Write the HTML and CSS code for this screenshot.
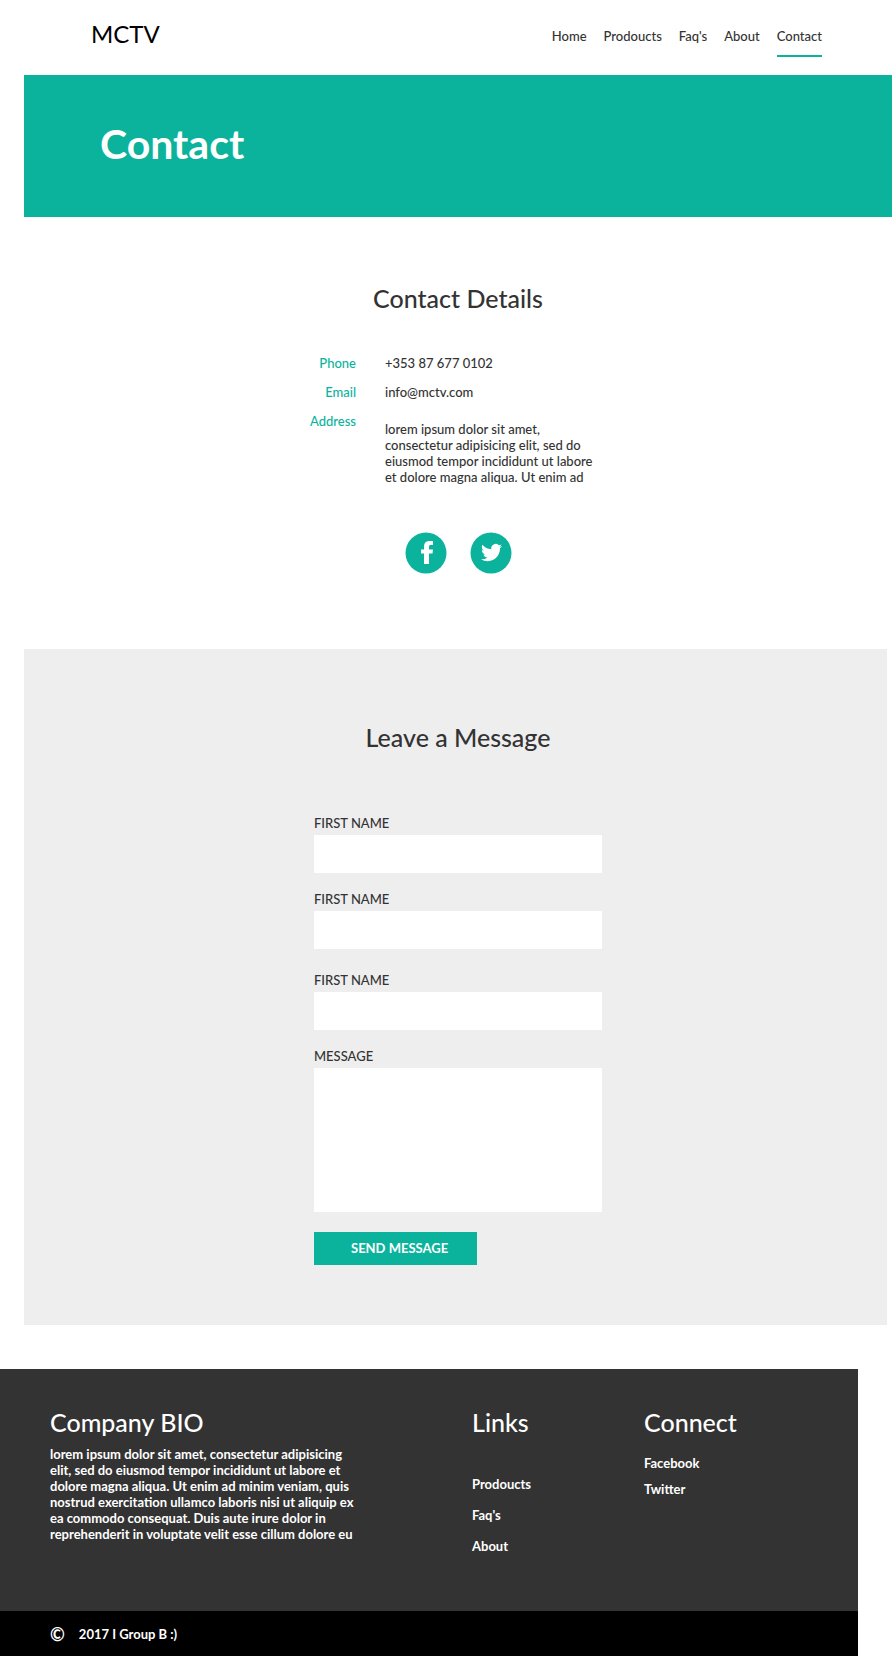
FILE: index.html
```html
<!DOCTYPE html>
<html lang="en">
<head>
<meta charset="utf-8">
<meta name="viewport" content="width=device-width, initial-scale=1">
<title>MCTV – Contact</title>
<link rel="stylesheet" href="styles.css">
</head>
<body>
<header class="site-header">
  <a class="logo" href="#">MCTV</a>
  <nav class="nav">
    <a class="nav-link" href="#">Home</a>
    <a class="nav-link" href="#">Prodoucts</a>
    <a class="nav-link" href="#">Faq's</a>
    <a class="nav-link" href="#">About</a>
    <a class="nav-link nav-link-active" href="#">Contact</a>
  </nav>
</header>
<main class="main">
  <section class="hero"><h1 class="hero-title">Contact</h1></section>
  <section class="details">
    <h2 class="section-title">Contact Details</h2>
    <dl class="info">
      <dt class="info-label">Phone</dt><dd class="info-value">+353 87 677 0102</dd>
      <dt class="info-label">Email</dt><dd class="info-value">info@mctv.com</dd>
      <dt class="info-label">Address</dt>
      <dd class="info-value info-address">lorem ipsum dolor sit amet,<br>consectetur adipisicing elit, sed do<br>eiusmod tempor incididunt ut labore<br>et dolore magna aliqua. Ut enim ad</dd>
    </dl>
    <div class="social">
      <a class="social-link" href="#" aria-label="Facebook">
        <svg class="social-icon" viewBox="0 0 42 42"><circle cx="21" cy="21" r="20.500"/><path class="glyph" d="M19 32V21.500H16V17.500H19V15C19 11 21 9 24.500 9H28V13H26C24.500 13 24 13.600 24 15V17.500H28L27.500 21.500H24V32Z"/></svg>
      </a>
      <a class="social-link" href="#" aria-label="Twitter">
        <svg class="social-icon" viewBox="0 0 42 42"><circle cx="21" cy="21" r="20.500"/><path class="glyph" transform="translate(11 10) scale(0.880)" d="M23.950 4.570a10 10 0 0 1-2.820.770 4.960 4.960 0 0 0 2.160-2.720c-.950.550-2 .960-3.130 1.180a4.920 4.920 0 0 0-8.380 4.480C7.690 8.100 4.070 6.130 1.640 3.160a4.820 4.820 0 0 0-.670 2.480c0 1.710.870 3.210 2.190 4.100a4.900 4.900 0 0 1-2.230-.620v.060a4.920 4.920 0 0 0 3.950 4.830 5 5 0 0 1-2.210.080 4.940 4.940 0 0 0 4.600 3.420A9.870 9.870 0 0 1 0 19.540a13.990 13.990 0 0 0 7.550 2.210c9.050 0 14-7.500 14-13.980 0-.210 0-.420-.020-.630a9.940 9.940 0 0 0 2.420-2.570Z"/></svg>
      </a>
    </div>
  </section>
  <section class="message">
    <h2 class="section-title">Leave a Message</h2>
    <form class="form">
      <div class="field"><label for="name-1">FIRST NAME</label><input class="input" id="name-1" type="text"></div>
      <div class="field field-spaced"><label for="name-2">FIRST NAME</label><input class="input" id="name-2" type="text"></div>
      <div class="field"><label for="name-3">FIRST NAME</label><input class="input" id="name-3" type="text"></div>
      <div class="field"><label for="message">MESSAGE</label><textarea class="input input-area" id="message"></textarea></div>
      <button class="send" type="button">SEND MESSAGE</button>
    </form>
  </section>
</main>
<footer class="footer">
  <div class="footer-main">
    <section>
      <h2 class="footer-title">Company BIO</h2>
      <p class="bio">lorem ipsum dolor sit amet, consectetur adipisicing<br>elit, sed do eiusmod tempor incididunt ut labore et<br>dolore magna aliqua. Ut enim ad minim veniam, quis<br>nostrud exercitation ullamco laboris nisi ut aliquip ex<br>ea commodo consequat. Duis aute irure dolor in<br>reprehenderit in voluptate velit esse cillum dolore eu</p>
    </section>
    <section>
      <h2 class="footer-title">Links</h2>
      <nav class="links"><a href="#">Prodoucts</a><a href="#">Faq's</a><a href="#">About</a></nav>
    </section>
    <section>
      <h2 class="footer-title">Connect</h2>
      <nav class="links links-connect"><a href="#">Facebook</a><a href="#">Twitter</a></nav>
    </section>
  </div>
  <div class="footer-bottom"><span class="copy">©</span><span>2017 I Group B :)</span></div>
</footer>
</body>
</html>
```

FILE: styles.css
```css
* { box-sizing: border-box; }
body {
  margin: 0;
  background: #fff;
  color: #333;
  font-family: Lato, "Open Sans", sans-serif;
  font-size: 13px;
  font-weight: 500;
  line-height: 16px;
}
a { color: inherit; text-decoration: none; }
h1, h2, p, dl, dd { margin: 0; }

.site-header {
  display: flex;
  justify-content: space-between;
  align-items: flex-start;
  height: 75px;
  padding: 19px 70px 0 91px;
}
.logo { color: #000; font-size: 24px; font-weight: 400; line-height: 30px; }
.nav { display: flex; gap: 17px; padding-top: 9px; }
.nav-link { padding-bottom: 11px; border-bottom: 2px solid transparent; }
.nav-link-active { border-color: #0bb39c; }

.main { padding-left: 24px; }
.hero { padding: 43px 76px 47px; background: #0bb39c; color: #fff; }
.hero-title { font-size: 41px; font-weight: 700; line-height: 52px; }

.section-title { font-size: 25px; font-weight: 500; line-height: 32px; text-align: center; }
.details { padding: 65px 0 75px; }
.info {
  display: grid;
  grid-template-columns: 47px 212px;
  justify-content: center;
  gap: 13px 29px;
  margin: 41px 10px 0 0;
}
.info-label { color: #0bb39c; text-align: right; }
.info-value { white-space: nowrap; }
.info-address { padding-top: 8px; }
.social { display: flex; justify-content: center; gap: 23px; margin-top: 47px; }
.social-link { display: block; width: 42px; height: 42px; }
.social-icon { display: block; width: 100%; height: 100%; fill: #0bb39c; }
.glyph { fill: #fff; }

.message { margin-right: 5px; padding: 72px 0 60px 5px; background: #eee; }
.form { display: flex; flex-direction: column; gap: 18px; width: 288px; margin: 62px auto 0; }
.field { display: flex; flex-direction: column; gap: 4px; }
.field-spaced { margin-bottom: 5px; }
.input { display: block; width: 100%; height: 38px; padding: 8px; border: 0; background: #fff; font: inherit; }
.input-area { height: 144px; resize: none; }
.send {
  align-self: flex-start;
  margin: 2px 0 0;
  padding: 8px 29px 9px 37px;
  border: 0;
  background: #0bb39c;
  color: #fff;
  font: inherit;
  font-weight: 700;
}

.footer { margin: 44px 34px 0 0; color: #fff; font-weight: 700; }
.footer-main {
  display: grid;
  grid-template-columns: 422fr 172fr 164fr;
  min-height: 242px;
  padding: 37px 50px 0;
  background: #333;
}
.footer-title { font-size: 25px; font-weight: 500; line-height: 32px; }
.bio { margin-top: 8px; white-space: nowrap; }
.links { display: flex; flex-direction: column; gap: 15px; margin-top: 38px; }
.links-connect { gap: 10px; margin-top: 17px; }
.footer-bottom { display: flex; align-items: center; gap: 14px; height: 45px; padding-left: 50px; background: #000; }
.copy { font-size: 18px; }
```
